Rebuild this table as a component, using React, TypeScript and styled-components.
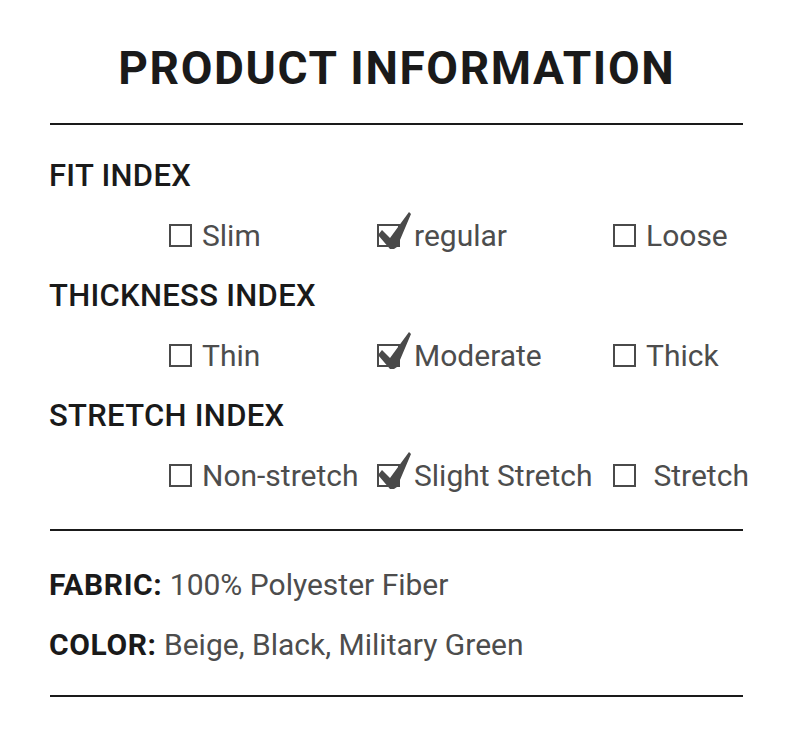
import React from "react"
import styled, { createGlobalStyle } from "styled-components"

const GlobalStyle = createGlobalStyle`
  html, body {
    margin: 0;
    padding: 0;
    background: #ffffff;
  }
  body {
    font-family: Roboto, "Liberation Sans", Arial, sans-serif;
  }
`

const Page = styled.div`
  width: 790px;
  height: 746px;
  background: #ffffff;
  box-sizing: border-box;
  padding: 37px 47px 0 49px;
`

const Title = styled.h1`
  margin: 0;
  height: 60px;
  line-height: 62px;
  text-align: center;
  font-size: 46px;
  font-weight: 700;
  letter-spacing: 1.6px;
  text-indent: 1.6px;
  color: #1a1a1a;
`

const Rule = styled.hr<{ $top: number; $bottom?: number }>`
  border: none;
  height: 2px;
  background: #1a1a1a;
  margin: ${(p) => p.$top}px 0 ${(p) => p.$bottom ?? 0}px 1px;
`

const Heading = styled.div`
  height: 60px;
  line-height: 62px;
  font-size: 31px;
  font-weight: 500;
  color: #1a1a1a;
  letter-spacing: 0.3px;
`

const Options = styled.div`
  height: 60px;
  display: grid;
  grid-template-columns: 208px 236px auto;
  align-items: center;
  padding-left: 120px;
`

const Option = styled.div<{ $gap: number }>`
  display: flex;
  align-items: center;
  gap: ${(p) => p.$gap}px;
  font-size: 30px;
  color: #4d4d4d;
  white-space: nowrap;
`

const Box = styled.span`
  position: relative;
  display: inline-block;
  width: 23px;
  height: 23px;
  box-sizing: border-box;
  border: 2px solid #4a4a4a;
  flex: none;
`

const Tick = styled.svg`
  position: absolute;
  left: -2px;
  top: -16px;
  width: 36px;
  height: 41px;
  overflow: visible;
`

const InfoRow = styled.div`
  height: 60px;
  line-height: 64px;
  font-size: 30px;
  color: #4d4d4d;
`

const InfoLabel = styled.b`
  font-weight: 700;
  color: #1a1a1a;
  letter-spacing: 0.6px;
`

type Opt = { label: string; checked?: boolean }

const sections: { title: string; options: Opt[] }[] = [
  {
    title: "FIT INDEX",
    options: [{ label: "Slim" }, { label: "regular", checked: true }, { label: "Loose" }],
  },
  {
    title: "THICKNESS INDEX",
    options: [{ label: "Thin" }, { label: "Moderate", checked: true }, { label: "Thick" }],
  },
  {
    title: "STRETCH INDEX",
    options: [
      { label: "Non-stretch" },
      { label: "Slight Stretch", checked: true },
      { label: "\u00a0Stretch" },
    ],
  },
]

const CheckBox = ({ checked }: { checked?: boolean }) => (
  <Box>
    {checked && (
      <Tick viewBox="-2 -16 36 41">
        <polygon
          points="-1,9 3,4 11,12 30,-14 32,-12 18,21 15,23 11,23"
          fill="#4a4a4a"
        />
      </Tick>
    )}
  </Box>
)

export default function App() {
  return (
    <>
      <GlobalStyle />
      <Page>
        <Title>PRODUCT INFORMATION</Title>
        <Rule $top={26} $bottom={20} />
        {sections.map((s) => (
          <React.Fragment key={s.title}>
            <Heading>{s.title}</Heading>
            <Options>
              {s.options.map((o) => (
                <Option key={o.label} $gap={o.checked ? 14 : 10}>
                  <CheckBox checked={o.checked} />
                  <span>{o.label}</span>
                </Option>
              ))}
            </Options>
          </React.Fragment>
        ))}
        <Rule $top={24} $bottom={22} />
        <InfoRow>
          <InfoLabel>FABRIC:</InfoLabel> 100% Polyester Fiber
        </InfoRow>
        <InfoRow>
          <InfoLabel>COLOR:</InfoLabel> Beige, Black, Military Green
        </InfoRow>
        <Rule $top={22} />
      </Page>
    </>
  )
}
